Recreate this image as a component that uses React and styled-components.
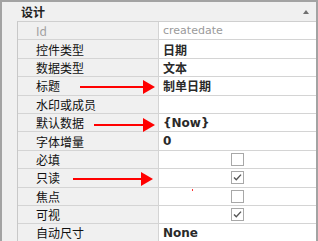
import React from 'react'
import styled, { createGlobalStyle } from 'styled-components'

const Global = createGlobalStyle`
    html, body {
        margin:0;
        padding:0;
        background:#f0f0f0;
    }
`;

const Panel = styled.div`
    position:relative;
    width:318px;
    height:241px;
    overflow:hidden;
    box-sizing:border-box;
    background:#f0f0f0;
    border-top:2px solid #a3a3a3;
    border-left:2px solid #a3a3a3;
    border-right:2px solid #a3a3a3;
    font-family:"DejaVu Sans","Noto Sans CJK SC",sans-serif;
    font-size:12px;
    color:#111;
`;

const Category = styled.div`
    display:flex;
    align-items:center;
    height:19px;
    padding-left:19px;
    font-family:"Noto Sans CJK SC",sans-serif;
    font-weight:bold;
    font-size:12px;
    color:#222;
`;

const Collapse = styled.span`
    margin-left:auto;
    margin-right:7px;
    width:0;
    height:0;
    border-left:3.5px solid transparent;
    border-right:3.5px solid transparent;
    border-bottom:4px solid #707070;
`;

const Body = styled.div`
    padding-left:15px;
`;

const Grid = styled.div`
    border-top:1px solid #cfcfcf;
    border-left:1px solid #c8c8c8;
`;

const Row = styled.div`
    display:grid;
    grid-template-columns:141px 1fr;
    height:18.4px;
    box-sizing:border-box;
    border-bottom:1px solid #d4d4d4;
`;

const Name = styled.div`
    display:flex;
    align-items:center;
    padding-left:18px;
    border-right:1px solid #d4d4d4;
    background:#f0f0f0;
    font-family:"Noto Sans CJK SC",sans-serif;
    font-size:12px;
    color:${p => p.$muted ? '#a0a0a0' : '#111'};
    white-space:nowrap;
`;

const Value = styled.div`
    display:flex;
    align-items:center;
    justify-content:${p => p.$center ? 'center' : 'flex-start'};
    padding-left:${p => p.$center ? '0' : '4px'};
    background:#fff;
    font-size:${p => p.$muted ? '11px' : '12px'};
    font-weight:${p => p.$muted ? 'normal' : 'bold'};
    color:${p => p.$muted ? '#9a9a9a' : '#2a2a2a'};
    white-space:nowrap;
`;

const Latin = styled.span`
    font-family:"DejaVu Sans",sans-serif;
    font-size:11px;
`;

const Box = styled.span`
    display:block;
    width:13px;
    height:13px;
    box-sizing:border-box;
    border:1px solid #a8a8a8;
    background:#fff;
    svg{
        display:block;
    }
`;

const Arrow = styled.div`
    position:absolute;
    height:15px;
    display:flex;
    align-items:center;
    pointer-events:none;
`;

const Shaft = styled.span`
    height:2px;
    flex:1;
    background:#ff0000;
`;

const Head = styled.span`
    width:0;
    height:0;
    border-top:7.5px solid transparent;
    border-bottom:7.5px solid transparent;
    border-left:12px solid #ff0000;
`;

const Dot = styled.span`
    position:absolute;
    width:1px;
    height:2px;
    background:#ff3030;
`;

function CheckBox({ checked }) {
    return (
        <Box>
            {checked && (
                <svg width="11" height="11" viewBox="0 0 11 11">
                    <path d="M2 5.5 L4.3 7.8 L9 2.6" fill="none" stroke="#555" strokeWidth="1.4" />
                </svg>
            )}
        </Box>
    )
}

const rows = [
    { name: 'Id', value: <Latin>createdate</Latin>, muted: true },
    { name: '控件类型', value: '日期' },
    { name: '数据类型', value: '文本' },
    { name: '标题', value: '制单日期' },
    { name: '水印或成员', value: '' },
    { name: '默认数据', value: '{Now}' },
    { name: '字体增量', value: '0' },
    { name: '必填', check: false },
    { name: '只读', check: true },
    { name: '焦点', check: false },
    { name: '可视', check: true },
    { name: '自动尺寸', value: 'None' },
];

const arrows = [
    { left: 80, top: 79, width: 75 },
    { left: 94, top: 117, width: 61 },
    { left: 73, top: 171, width: 80 },
];

export default function App() {
    return (
        <>
            <Global />
            <Panel>
                <Category>
                    设计
                    <Collapse />
                </Category>
                <Body>
                    <Grid>
                        {rows.map(r => (
                            <Row key={r.name}>
                                <Name $muted={r.muted}>{r.name}</Name>
                                {r.check !== undefined ? (
                                    <Value $center>
                                        <CheckBox checked={r.check} />
                                    </Value>
                                ) : (
                                    <Value $muted={r.muted}>{r.value}</Value>
                                )}
                            </Row>
                        ))}
                    </Grid>
                </Body>
                {arrows.map((a, i) => (
                    <Arrow key={i} style={{ left: a.left - 2, top: a.top - 2, width: a.width }}>
                        <Shaft />
                        <Head />
                    </Arrow>
                ))}
                <Dot style={{ left: 190, top: 187 }} />
            </Panel>
        </>
    )
}
